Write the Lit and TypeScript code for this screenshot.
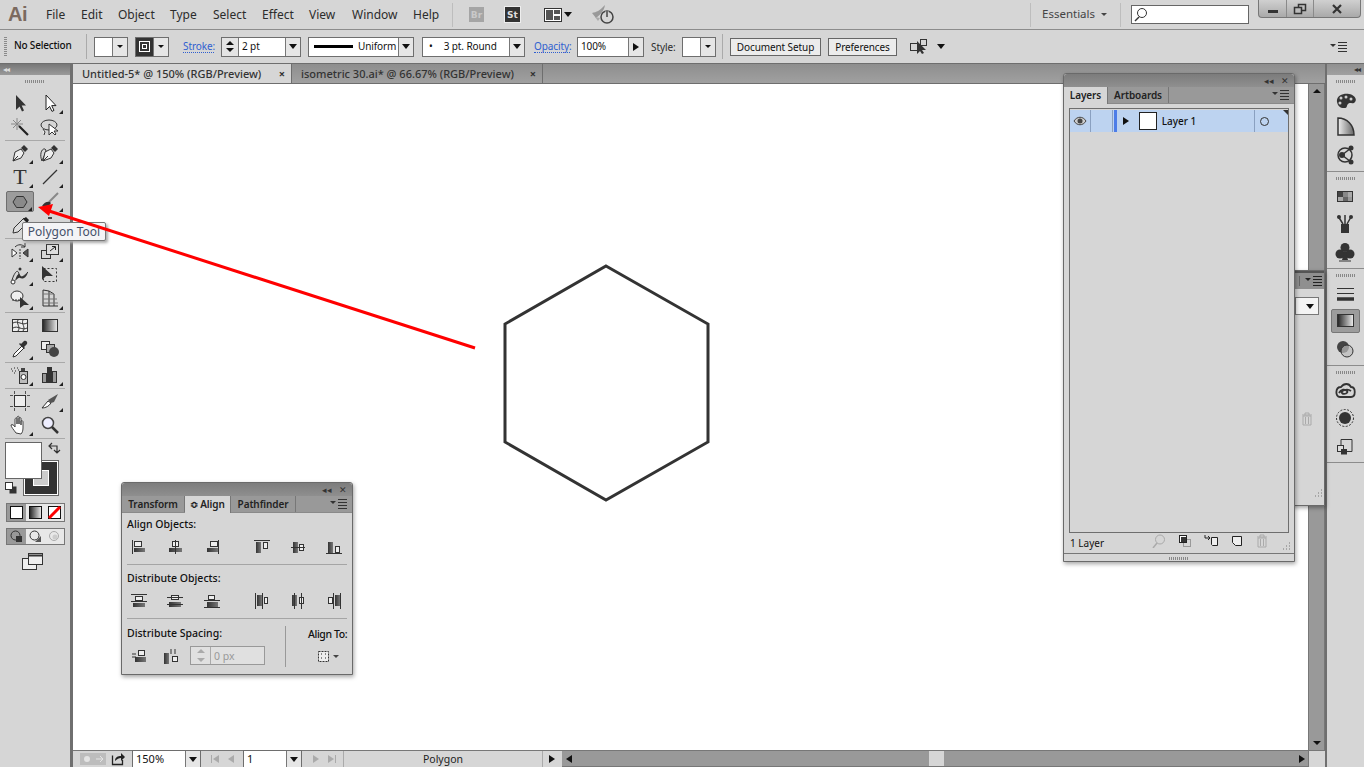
import { LitElement, html, css, svg } from 'lit';
import { customElement } from 'lit/decorators.js';

const ic = (c: unknown, w = 20, h = 20) =>
  html`<svg width="${w}" height="${h}" viewBox="0 0 ${w} ${h}">${c}</svg>`;

const pen = svg`<path d="M3 18l2-9 6-3 3 4-3 5z" fill="#eee" stroke="#333"/><path d="M11 5l3-3 4 4-3 3z" fill="#333"/><path d="M3 18l5-5" stroke="#333"/>`;

const tools: Record<string, unknown> = {
  sel: svg`<path d="M6 2v15l3.6-3.6 2.4 5 2-1-2.3-4.8H16z" fill="#333"/>`,
  dsel: svg`<path d="M6 2v15l3.6-3.6 2.4 5 2-1-2.3-4.8H16z" fill="#fff" stroke="#222"/>`,
  wand: svg`<path d="M7 1v12M1 7h12M3 3l8 8M11 3l-8 8" stroke="#888"/><path d="M9 9l9 9" stroke="#222" stroke-width="2.2"/>`,
  lasso: svg`<ellipse cx="9" cy="8" rx="8" ry="5" fill="none" stroke="#333"/><path d="M3 12l2 3-1 3M9 7v11l3-3 3 3 1-1-2-3h4z" fill="#fff" stroke="#333"/>`,
  pen,
  curv: svg`<path d="M2 18C-1 11 2 5 5 6c3 2-2 8-3 12z" fill="none" stroke="#333"/>${pen}`,
  line: svg`<path d="M3 17L17 3" stroke="#333" stroke-width="1.2"/>`,
  poly: svg`<path d="M6.500 4.500h7l3.500 5.500-3.500 5.500h-7L3 10z" fill="#8a8a8a" stroke="#333"/>`,
  brush: svg`<path d="M18 2L9 11" stroke="#888" stroke-width="2"/><path d="M2 15c2-4 6-5 8-4s0 5-8 4z" fill="#333"/>`,
  pencil: svg`<path d="M3 18l1-5L14 3l4 4L8 17z" fill="#ddd" stroke="#333"/><path d="M13 4l3-2 3 3-2 3z" fill="#222"/>`,
  shaper: svg`<path d="M8 3h4" stroke="#444" stroke-width="2"/>`,
  reflect: svg`<path d="M2 8v8l5-4z" fill="#fff" stroke="#333"/><path d="M18 8v8l-5-4z" fill="#555" stroke="#333"/><path d="M5 6c3-3 7-3 10 0" stroke="#333" fill="none"/><path d="M15 2v4h-4" fill="none" stroke="#333"/><path d="M10 8v10" stroke="#333" stroke-dasharray="2 1"/>`,
  scale: svg`<rect x="1.500" y="9.500" width="9" height="8" fill="none" stroke="#333"/><rect x="6.500" y="3.500" width="12" height="10" fill="#ddd" stroke="#333"/><path d="M10 10l5-4M12 5.500h3.500V9" fill="none" stroke="#222"/>`,
  width: svg`<path d="M2 15C5 6 8 4 9 9s3 4 9-2" fill="none" stroke="#333"/><path d="M5 16c2-7 4-8 5-6s3 3 8-3c-2 7-6 7-8 6s-3 2-5 3z" fill="#333"/><circle cx="3" cy="17" r="2" fill="#fff" stroke="#333"/><circle cx="10" cy="4" r="1.500" fill="#333"/>`,
  free: svg`<rect x="3.500" y="3.500" width="13" height="13" fill="none" stroke="#333" stroke-dasharray="2 2"/><path d="M2 1v14l4-4h7z" fill="#333"/>`,
  builder: svg`<ellipse cx="7" cy="7" rx="6" ry="5" fill="#eee" stroke="#333"/><path d="M2 11h12" stroke="#333" stroke-dasharray="2 1"/><path d="M10 8l9 8h-5l-4 3z" fill="#333"/>`,
  persp: svg`<path d="M3 1v16h15M3 1l6 1v15M9 2l5 3v12" fill="none" stroke="#333"/><path d="M3 5h11M3 10h14M3 14h15" stroke="#777"/>`,
  mesh: svg`<rect x="2.500" y="4.500" width="15" height="12" fill="#eee" stroke="#333"/><path d="M3 8c5-3 9 3 14 0M3 13c5-3 9 3 14 0M8 5c-2 4 3 7 0 11M13 5c-2 4 3 7 0 11" fill="none" stroke="#333"/>`,
  grad: svg`<rect x="2.500" y="4.500" width="15" height="12" fill="url(#g)" stroke="#333"/>`,
  drop: svg`<path d="M3 18l1-3 8-8 2 2-8 8z" fill="#fff" stroke="#333"/><path d="M11 5l3-3c2-1 4 1 3 3l-3 3 1 1-1 1-5-5 1-1z" fill="#333"/>`,
  blend: svg`<rect x="1.500" y="2.500" width="8" height="8" fill="#eee" stroke="#333"/><rect x="6.500" y="5.500" width="8" height="8" fill="#aaa" stroke="#333"/><circle cx="14" cy="13" r="5" fill="#444"/>`,
  spray: svg`<path d="M1 4h1M4 3h1M7 3h1M2 6h1M5 6h1M8 5h1M4 8h1" stroke="#222"/><rect x="9.500" y="6.500" width="8" height="12" fill="#bbb" stroke="#333"/><rect x="11" y="3" width="4" height="3" fill="#444"/><circle cx="13.500" cy="12" r="2.500" fill="#fff" stroke="#333"/>`,
  graph: svg`<rect x="2.500" y="8.500" width="4" height="9" fill="#999" stroke="#333"/><rect x="7" y="2" width="5" height="16" fill="#333"/><rect x="12.500" y="6.500" width="4" height="11" fill="#999" stroke="#333"/>`,
  board: svg`<rect x="4.500" y="4.500" width="11" height="11" fill="#eee" stroke="#333"/><path d="M0 4.500h3M17 4.500h3M0 15.500h3M17 15.500h3M4.500 0v3M15.500 0v3M4.500 17v3M15.500 17v3" stroke="#555"/>`,
  slice: svg`<path d="M2 17l6-7 3 2c-2 3-5 5-9 5z" fill="#fff" stroke="#333"/><path d="M8 9l10-6-4 8-3 1z" fill="#555"/>`,
  hand: svg`<path d="M6 18C4 15 1 12 1 10c1-1 3 0 4 2V4c1-2 2-1 2 0v5-7c1-1 2-1 2 0v7-6c1-1 2 0 2 0v7-4c1-1 2 0 2 1v6c0 3-1 5-2 6z" fill="#fff" stroke="#444"/>`,
  zoom: svg`<circle cx="8" cy="8" r="5.500" fill="#eef" stroke="#444" stroke-width="1.500"/><path d="M12 12l6 6" stroke="#333" stroke-width="2.500"/>`,
};

// name, has flyout corner
const groups: [string, boolean][][] = [
  [['sel', false], ['dsel', true], ['wand', false], ['lasso', false]],
  [['pen', true], ['curv', true], ['T', true], ['line', true], ['poly', true], ['brush', true], ['pencil', true], ['shaper', false]],
  [['reflect', true], ['scale', true], ['width', true], ['free', false], ['builder', true], ['persp', true]],
  [['mesh', false], ['grad', false], ['drop', true], ['blend', false]],
  [['spray', true], ['graph', true]],
  [['board', false], ['slice', true], ['hand', true], ['zoom', false]],
];

const dock: { name: string; on?: boolean; c: unknown }[][] = [
  [
    { name: 'color', c: svg`<path d="M2 12C1 6 8 3 14 4s9 6 5 9c-3 1-4-1-6 1s0 4-4 4-6-2-7-6z" fill="#333"/><circle cx="6" cy="8" r="1.500" fill="#ccc"/><circle cx="11" cy="7" r="1.500" fill="#ccc"/><circle cx="16" cy="9" r="1.500" fill="#ccc"/><circle cx="5" cy="13" r="1.500" fill="#ccc"/>` },
    { name: 'guide', c: svg`<path d="M3 1c9 0 16 7 16 17H3z" fill="url(#g2)" stroke="#333" stroke-width="1.500"/>` },
    { name: 'cc', c: svg`<circle cx="10" cy="10" r="7" fill="none" stroke="#333" stroke-width="1.500"/><circle cx="7" cy="10" r="3" fill="#333"/><path d="M7 10L16 3M7 10l9 7" stroke="#333" stroke-width="1.500"/><circle cx="16" cy="3" r="2.500" fill="#333"/><circle cx="16" cy="17" r="2.500" fill="#333"/>` },
  ],
  [
    { name: 'swatches', c: svg`<rect x="2.500" y="4.500" width="15" height="10" fill="#aaa" stroke="#333"/><path d="M3 5h5v5H3z" fill="#444"/><path d="M8 5h5v5H8z" fill="#888"/><path d="M8 10h5v4H8z" fill="#666"/><path d="M13 10h4v4h-4z" fill="#999"/>` },
    { name: 'brushes', c: svg`<rect x="6" y="10" width="8" height="9" fill="#333"/><path d="M8 10L3 2M10 10V1M12 10l4-7" stroke="#333" stroke-width="1.500"/><circle cx="4" cy="3" r="2" fill="#333"/><circle cx="16" cy="3" r="2" fill="#333"/>` },
    { name: 'symbols', c: svg`<circle cx="10" cy="5.500" r="4.500" fill="#333"/><circle cx="5" cy="12" r="4.500" fill="#333"/><circle cx="15" cy="12" r="4.500" fill="#333"/><path d="M9 10h2l2 8H7z" fill="#333"/><path d="M4 19h12" stroke="#333"/>` },
  ],
  [
    { name: 'stroke', c: svg`<path d="M2 4.500h17M2 9.500h17" stroke="#333"/><path d="M2 15h17" stroke="#333" stroke-width="3.500"/>` },
    { name: 'gradient', on: true, c: svg`<rect x="2.500" y="3.500" width="16" height="12" fill="url(#g)" stroke="#333"/>` },
    { name: 'transp', c: svg`<circle cx="8" cy="8" r="6" fill="#444"/><circle cx="12" cy="12" r="6" fill="#bbb" fill-opacity=".7" stroke="#333"/>` },
  ],
  [
    { name: 'cloud', c: svg`<path d="M5 16C0 16 0 6 6 6c3-4 8-4 10 0 5 0 5 10 0 10H5z" fill="none" stroke="#333" stroke-width="1.800"/><path d="M4 12c2-4 6-4 8-2s-3 4-5 2 5-5 9-2" fill="none" stroke="#333" stroke-width="1.800"/>` },
    { name: 'appearance', c: svg`<circle cx="10" cy="10" r="8.500" fill="none" stroke="#333" stroke-dasharray="2 1.500"/><circle cx="10" cy="10" r="6" fill="#333"/>` },
    { name: 'styles', c: svg`<path d="M6 9V3.500h11v12h-6" fill="none" stroke="#333"/><rect x="2.500" y="9.500" width="6" height="6" fill="#ddd" stroke="#333"/><rect x="6" y="13" width="6" height="5.500" fill="#333"/>` },
  ],
];

type Box = [number, number, number, number];
const al = (lines: string, dark: Box, light: Box) => ic(svg`
  <rect x="${dark[0]}" y="${dark[1]}" width="${dark[2]}" height="${dark[3]}" fill="url(#bar)"/>
  <rect x="${light[0] + 0.5}" y="${light[1] + 0.5}" width="${light[2] - 1}" height="${light[3] - 1}" fill="#eee" stroke="#333"/>
  <path d="${lines}" stroke="#333"/>`, 16, 16);

const alignRow = [
  al('M1.500 1v14', [3, 9, 11, 4], [3, 2, 8, 6]),
  al('M8.500 1v14', [2, 9, 13, 4], [5, 2, 7, 6]),
  al('M14.500 1v14', [3, 9, 11, 4], [6, 2, 8, 6]),
  al('M0 1.500h16', [2, 3, 5, 11], [9, 3, 5, 7]),
  al('M1 8.500h14', [3, 3, 5, 11], [9, 5, 5, 7]),
  al('M0 14.500h16', [2, 3, 5, 11], [9, 7, 5, 7]),
];
const distRow = [
  al('M0 1.500h16M0 8.500h16', [2, 10, 12, 4], [4, 3, 8, 5]),
  al('M0 4.500h16M0 11.500h16', [2, 9, 12, 5], [4, 2, 8, 5]),
  al('M0 7.500h16M0 14.500h16', [3, 9, 11, 5], [4, 2, 7, 5]),
  al('M1.500 0v16M8.500 0v16', [3, 2, 5, 11], [10, 4, 4, 7]),
  al('M4.500 0v16M11.500 0v16', [2, 2, 5, 11], [9, 4, 5, 7]),
  al('M7.500 0v16M14.500 0v16', [9, 2, 5, 11], [2, 4, 5, 7]),
];
const spaceIcons = [
  al('M1 6h4M1 9h4', [4, 9, 11, 5], [7, 2, 7, 6]),
  al('M8 1v5M12 1v5', [1, 5, 5, 11], [9, 8, 6, 6]),
];

@customElement('app-root')
export class AppRoot extends LitElement {
  static styles = css`
    :host {
      display: block; position: relative; width: 1364px; height: 767px; overflow: hidden;
      background: #d6d6d6; color: #2c2c2c;
      font: 11px "Noto Sans", "Open Sans", sans-serif;
    }
    svg { display: block; flex: none; }
    .defs { position: absolute; }
    .tri { width: 0; height: 0; flex: none; border-left: 4.5px solid transparent; border-right: 4.5px solid transparent; border-top: 5px solid #111; }
    .tri.sm { border-left-width: 3px; border-right-width: 3px; border-top-width: 3px; border-top-color: #444; }
    .tri.blk { border-top-color: #111; }
    .tr { width: 0; height: 0; flex: none; border-top: 4.5px solid transparent; border-bottom: 4.5px solid transparent; border-left: 6px solid #111; }
    .tl { width: 0; height: 0; flex: none; border-top: 4.5px solid transparent; border-bottom: 4.5px solid transparent; border-right: 6px solid #111; }

    /* menu bar */
    .menubar { height: 29px; display: flex; align-items: center; border-bottom: 1px solid #8c8c8c; box-sizing: content-box; }
    .logo { width: 46px; padding-left: 8px; box-sizing: border-box; font: bold 20px "Liberation Sans", sans-serif; color: #7b6a5f; letter-spacing: -0.5px; }
    .menus { display: grid; grid-template-columns: 35px 37px 52px 43px 49px 47px 43px 61px 39px; font-size: 12px; padding-bottom: 1px; }
    .vsep { width: 1px; height: 24px; background: #bdbdbd; flex: none; }
    .vsep.r { margin-left: 13px; }
    .app { width: 15px; height: 15px; display: flex; align-items: center; justify-content: center; font: bold 9px "DejaVu Sans", sans-serif; flex: none; }
    .app.br { margin-left: 16px; background: #a5a5a5; color: #c9c9c9; }
    .app.st { margin-left: 21px; background: #333; color: #ddd; outline: 1px solid #eee; }
    .layout { margin-left: 24px; }
    .mini { margin-left: 2px; }
    .rocket { margin-left: 20px; }
    .fill { flex: 1; }
    .essentials { width: 59px; padding-left: 11px; font-size: 11.5px; color: #444; padding-bottom: 3px; white-space: nowrap; }
    .search { margin-left: 10px; width: 115px; height: 17px; background: #fff; border: 1px solid #666; box-sizing: content-box; display: flex; align-items: center; padding-left: 1px; }
    .winbtns { margin-left: 9px; margin-right: 3px; align-self: flex-start; height: 17px; display: flex; border: 1px solid #777; border-top: 0; border-radius: 0 0 4px 4px; background: linear-gradient(#d0d0d0, #a9a9a9); }
    .winbtns div { display: flex; align-items: center; justify-content: center; border-left: 1px solid #8a8a8a; }
    .winbtns div:first-child { width: 27px; border-left: 0; }
    .winbtns div:nth-child(2) { width: 26px; }
    .winbtns div:nth-child(3) { width: 46px; }

    /* control bar */
    .control { height: 33px; display: flex; align-items: center; border-bottom: 1px solid #6e6e6e; font-size: 10px; letter-spacing: -0.1px; }
    .grip-v { margin-left: 4px; width: 3px; height: 19px; background: repeating-linear-gradient(#8a8a8a 0 1px, transparent 1px 2px); }
    .nosel { margin-left: 7px; width: 72px; font-weight: 500; color: #111; white-space: nowrap; padding-bottom: 3px; letter-spacing: -0.2px; }
    .div2 { width: 1px; height: 25px; background: #aaa; flex: none; }
    .box { height: 18px; display: flex; align-items: stretch; background: #fff; border: 1px solid #6e6e6e; flex: none; }
    .dd { width: 14px; background: #e6e6e6; border-left: 1px solid #777; display: flex; align-items: center; justify-content: center; flex: none; }
    .swatch { width: 32px; justify-content: flex-end; }
    .ml-fill { margin-left: 7px; }
    .stroke-swatch { margin-left: 7px; background: #333; }
    .stroke-swatch .well { width: 17px; display: flex; align-items: center; justify-content: center; }
    .link { color: #2f5fd0; border-bottom: 1px dotted #2f5fd0; line-height: 11px; flex: none; }
    .stroke-lbl { margin-left: 14px; width: 31px; }
    .spin { margin-left: 7px; width: 78px; }
    .spin .arrows { width: 17px; background: #e4e4e4; border-right: 1px solid #777; display: flex; flex-direction: column; align-items: center; justify-content: space-around; padding: 2px 0; box-sizing: border-box; }
    .up { width: 0; height: 0; border-left: 4px solid transparent; border-right: 4px solid transparent; border-bottom: 4px solid #111; }
    .down { width: 0; height: 0; border-left: 4px solid transparent; border-right: 4px solid transparent; border-top: 4px solid #111; }
    .val { flex: 1; padding-left: 3px; line-height: 17px; color: #111; white-space: nowrap; overflow: hidden; }
    .uniform { margin-left: 7px; width: 104px; }
    .uniform .val { display: flex; align-items: center; padding-left: 5px; gap: 5px; }
    .uniform i { width: 39px; height: 3px; background: #000; flex: none; }
    .round { margin-left: 8px; width: 101px; }
    .round .val { padding-left: 6px; display: flex; gap: 11px; }
    .op-lbl { margin-left: 9px; width: 36px; }
    .opacity { margin-left: 7px; width: 65px; }
    .plain { flex: none; }
    .style-lbl { margin-left: 7px; width: 31px; }
    .style-box { width: 32px; }
    .div3 { margin-left: 6px; }
    .btn { height: 16px; border: 1px solid #666; background: #ececec; display: flex; align-items: center; justify-content: center; color: #111; flex: none; white-space: nowrap; }
    .doc-setup { margin-left: 7px; width: 89px; }
    .prefs { margin-left: 7px; width: 67px; }
    .isolate { margin-left: 12px; }
    .iso-arrow { margin-left: 8px; }
    .menu-ic { margin-right: 16px; }

    /* workspace */
    .workspace { display: flex; height: 703px; }
    .tools { width: 70px; flex: none; border-right: 3px solid #6f6f6f; display: flex; flex-direction: column; }
    .head { height: 11px; background: linear-gradient(#777, #9a9a9a); color: #ddd; font-size: 8px; line-height: 10px; padding-left: 3px; flex: none; letter-spacing: -1px; }
    .grip-h { height: 3px; width: 20px; margin: 5px auto 0; background: repeating-linear-gradient(90deg, #888 0 1px, transparent 1px 2px); flex: none; }
    .toolgrid { display: grid; grid-template-columns: 30px 30px; grid-auto-rows: 24px; padding-left: 5px; }
    .toolgrid.first { margin-top: 8px; }
    .tool { position: relative; display: flex; align-items: center; justify-content: center; font: 22px "Liberation Serif", serif; color: #333; }
    .tool.corner::after { content: ""; position: absolute; right: 2px; bottom: 1px; border-bottom: 4px solid #222; border-left: 4px solid transparent; }
    .tool.active { margin: 2px 1px 1px; background: #9c9c9c; border: 1px solid #6f6f6f; border-radius: 2px; box-sizing: border-box; }
    .tool.active::after { right: 1px; bottom: 0; }
    .tsep { height: 1px; margin: 1px 5px 0; background: #a9a9a9; flex: none; }
    .colors { position: relative; height: 58px; margin-top: 3px; flex: none; }
    .colors .fillbox { position: absolute; left: 5px; top: 0; width: 35px; height: 35px; background: #fff; border: 1px solid #666; z-index: 1; }
    .colors .strokebox { position: absolute; left: 23px; top: 18px; width: 36px; height: 36px; box-sizing: border-box; background: #333; border: 1px solid #666; box-shadow: inset 0 0 0 1px #fff; display: flex; align-items: center; justify-content: center; }
    .colors .inner { width: 16px; height: 16px; background: #ccc; border: 1px solid #fff; box-sizing: border-box; }
    .colors .swap { position: absolute; left: 47px; top: 0; }
    .colors .def { position: absolute; left: 5px; top: 40px; }
    .modes { margin: 3px 0 0 6px; width: 59px; height: 19px; display: flex; border: 1px solid #777; box-sizing: border-box; background: #e8e8e8; flex: none; }
    .modes div { flex: 1; display: flex; align-items: center; justify-content: center; }
    .modes div:first-child { background: #999; }
    .modes.draw { margin-top: 6px; height: 17px; }
    .screen { margin: 8px 0 0 22px; }

    .center { flex: 1; min-width: 0; display: flex; flex-direction: column; }
    .tabs { height: 19px; display: flex; background: linear-gradient(#8e8e8e, #a0a0a0); border-bottom: 1px solid #6e6e6e; flex: none; }
    .tab { display: flex; align-items: center; justify-content: space-between; padding: 0 6px 0 9px; box-sizing: border-box; font-size: 11px; font-weight: 500; color: #333; white-space: nowrap; border-right: 1px solid #6e6e6e; }
    .tab.on { width: 219px; background: #d6d6d6; }
    .tab.off { width: 251px; }
    .x { font-size: 11px; line-height: 10px; color: #333; font-weight: 700; }
    .doc { flex: 1; display: flex; min-height: 0; }
    .canvas { flex: 1; background: #fff; }
    .vscroll { width: 15px; background: #999; border-left: 1px solid #777; border-right: 1px solid #777; display: flex; flex-direction: column; align-items: center; justify-content: space-between; padding: 5px 0; box-sizing: content-box; }
    .statusbar { height: 17px; display: flex; align-items: center; border-top: 1px solid #777; flex: none; box-sizing: border-box; }
    .share { margin-left: 5px; }
    .gear { margin-left: 7px; }
    .zoomf { margin-left: 6px; width: 67px; height: 16px; }
    .zoomf .val, .pagef .val { line-height: 15px; }
    .nav { flex: none; }
    .nav.a { margin-left: 9px; width: 33px; }
    .pagef { width: 57px; height: 16px; }
    .nav.b { margin-left: 9px; width: 32px; }
    .polygon { width: 200px; height: 100%; border-left: 1px solid #aaa; border-right: 1px solid #aaa; display: flex; align-items: center; justify-content: center; color: #222; box-sizing: border-box; font-size: 10.5px; }
    .hscroll-r { margin-left: 6px; }
    .hscroll { margin-left: 7px; flex: 1; height: 100%; background: #999; display: flex; align-items: center; justify-content: space-between; padding: 0 3px 0 4px; position: relative; border-bottom: 1px solid #777; box-sizing: border-box; }
    .thumb { position: absolute; left: 367px; top: 0; width: 15px; height: 100%; background: #d6d6d6; }
    .corner-sq { width: 17px; height: 100%; flex: none; background: #d6d6d6; border-left: 1px solid #777; box-sizing: border-box; }

    .dock { width: 39px; flex: none; border-left: 2px solid #6f6f6f; box-sizing: border-box; display: flex; flex-direction: column; }
    .dock .head { text-align: right; padding: 0 4px 0 0; background: linear-gradient(#909090, #a0a0a0); color: #333; }
    .dgroup { border-bottom: 1px solid #8c8c8c; padding: 5px 0 2.500px; display: flex; flex-direction: column; align-items: center; flex: none; }
    .dgroup .grip-h { margin: 0 auto 3px; }
    .dicon { height: 27.500px; width: 29px; display: flex; align-items: center; justify-content: center; }
    .dicon.on { height: 24px; margin: 1.750px 0; background: #9c9c9c; border: 1px solid #777; border-radius: 2px; box-sizing: border-box; }

    /* free floating things */
    .over { position: absolute; left: 0; top: 0; pointer-events: none; }
    .tip { position: absolute; left: 22px; top: 222px; height: 19px; width: 84px; box-sizing: border-box; background: #f4f4f6; border: 1px solid #777; border-radius: 2px; box-shadow: 2px 2px 3px #aaa; display: flex; align-items: center; justify-content: center; color: #44506a; font-size: 12px; white-space: nowrap; }
    .panel { position: absolute; background: #d6d6d6; border: 1px solid #6a6a6a; box-shadow: 1px 2px 4px rgba(0,0,0,.35); box-sizing: border-box; display: flex; flex-direction: column; border-radius: 3px 3px 0 0; }
    .phead { height: 13px; background: linear-gradient(#7c7c7c, #8f8f8f); display: flex; align-items: center; justify-content: flex-end; gap: 7px; padding: 0 5px 1px 0; box-sizing: border-box; color: #333; font-size: 9px; line-height: 9px; flex: none; border-radius: 3px 3px 0 0; }
    .ptabs { height: 17px; display: flex; background: #999; border-bottom: 1px solid #8a8a8a; flex: none; align-items: stretch; box-sizing: border-box; }
    .ptab { display: flex; align-items: center; justify-content: center; font-weight: 600; font-size: 10px; color: #222; border-right: 1px solid #777; box-sizing: border-box; white-space: nowrap; padding-bottom: 1px; letter-spacing: -0.1px; }
    .ptab.on { background: #d6d6d6; margin-bottom: -1px; }
    .pmenu { margin-left: auto; align-self: center; margin-right: 4px; }
    .layers { left: 1063px; top: 73px; width: 232px; height: 489px; }
    .layers .ptab:nth-child(1) { width: 44px; }
    .layers .ptab:nth-child(2) { width: 61px; }
    .list { margin: 4px 5px 0; height: 425px; border: 1px solid #6e6e6e; box-sizing: border-box; flex: none; }
    .row { height: 22px; margin-top: 1px; background: #bdd3f0; display: flex; align-items: center; position: relative; }
    .row .eye { width: 20px; height: 100%; border-right: 1px solid #8aa0c0; display: flex; align-items: center; justify-content: center; }
    .row .lock { width: 21px; height: 100%; border-right: 1px solid #8aa0c0; flex: none; }
    .row .bluebar { width: 3px; height: 100%; margin-left: 1px; background: #4d7de8; flex: none; }
    .row .tr { margin-left: 6px; }
    .row .thumbn { width: 18px; height: 18px; margin-left: 10px; background: #fff; border: 1px solid #222; box-sizing: border-box; flex: none; }
    .row .name { margin-left: 5px; width: 94px; color: #111; font-size: 10px; font-weight: 500; padding-bottom: 1px; }
    .row .target { width: 34px; height: 100%; border-left: 1px solid #8aa0c0; display: flex; align-items: center; justify-content: center; padding-right: 14px; box-sizing: border-box; }
    .row .target i { width: 7px; height: 7px; border: 1px solid #333; border-radius: 50%; }
    .row::after { content: ""; position: absolute; right: 0; top: 0; border-top: 5px solid #333; border-left: 5px solid transparent; }
    .pfoot { height: 20px; display: flex; align-items: center; padding-left: 6px; font-size: 10px; color: #111; flex: none; }
    .pfoot .ficons { margin-left: auto; margin-right: 13px; display: flex; gap: 12px; padding-bottom: 4px; }
    .pfoot .rsz { margin: 7px 3px 0 0; }
    .pstrip { height: 8px; border-top: 1px solid #777; display: flex; align-items: center; justify-content: center; flex: none; }
    .pstrip .grip-h { margin: 0; }
    .behind { left: 1280px; top: 270px; width: 45px; height: 236px; border-radius: 0; }
    .bh { height: 18px; background: #8f8f8f; display: flex; align-items: center; justify-content: flex-end; gap: 5px; padding-right: 1px; flex: none; border-top: 2px solid #555; box-sizing: border-box; }
    .bh i { width: 1px; height: 10px; background: #666; }
    .behind .bd { margin: 8px 0 0 14px; width: 24px; height: 18px; display: flex; }
    .dd2 { flex: 1; background: #f4f4f4; border: 1px solid #777; display: flex; align-items: center; justify-content: center; padding-left: 6px; }
    .behind .trash { margin: 97px 0 0 20px; }
    .behind .rz { margin: 63px 0 0 32px; }
    .align { left: 121px; top: 482px; width: 232px; height: 193px; }
    .align .ptab:nth-child(1) { width: 63px; }
    .align .ptab:nth-child(2) { width: 46px; gap: 2px; }
    .align .ptab:nth-child(3) { width: 65px; }
    .abody { padding: 4px 5px 0; flex: 1; display: flex; flex-direction: column; }
    .abody label { font-size: 10.5px; font-weight: 500; color: #111; line-height: 14px; height: 14px; white-space: nowrap; }
    .irow { display: grid; grid-template-columns: 36px 37px 50px 36px 36px 20px; padding-left: 4px; margin-top: 8px; height: 16px; }
    .asep { height: 1px; background: #a5a5a5; margin: 9px 0 6px; flex: none; }
    .bottom { display: flex; }
    .spacing { width: 158px; }
    .sprow { display: flex; align-items: center; margin-top: 6px; padding-left: 4px; }
    .sprow svg + svg { margin-left: 16px; }
    .spin2 { margin-left: 11px; width: 75px; height: 19px; border: 1px solid #999; box-sizing: border-box; display: flex; background: #e0e0e0; color: #999; align-items: center; font-size: 10.5px; }
    .spin2 .a { width: 19px; height: 100%; border-right: 1px solid #aaa; display: flex; flex-direction: column; justify-content: space-around; align-items: center; margin-right: 3px; }
    .spin2 .up { border-bottom-color: #aaa; }
    .spin2 .down { border-top-color: #aaa; }
    .alignto { border-left: 1px solid #999; height: 41px; margin-top: 1px; padding-left: 22px; width: 60px; box-sizing: border-box; flex: none; white-space: nowrap; }
    .alignto label { letter-spacing: -0.4px; }
    .ato { margin: 7px 0 0 7px; display: flex; align-items: center; gap: 2px; }
  `;

  private menuIcon(c = '#333') {
    return ic(svg`<path d="M0 3h6L3 6z" fill="${c}"/><path d="M8 1.500h9M8 4.500h9M8 7.500h9M8 10.500h9" stroke="${c}"/>`, 18, 12);
  }

  private grip() { return html`<div class="grip-h"></div>`; }

  render() {
    const menus = ['File', 'Edit', 'Object', 'Type', 'Select', 'Effect', 'View', 'Window', 'Help'];
    return html`
      <svg class="defs" width="0" height="0"><defs>
        <linearGradient id="g"><stop offset="0" stop-color="#222"/><stop offset="1" stop-color="#eee"/></linearGradient>
        <linearGradient id="g2" x1="0" y1="0" x2="1" y2="0"><stop offset="0" stop-color="#eee"/><stop offset="1" stop-color="#666"/></linearGradient>
        <linearGradient id="bar"><stop offset="0" stop-color="#333"/><stop offset="1" stop-color="#777"/></linearGradient>
      </defs></svg>

      <div class="menubar">
        <div class="logo">Ai</div>
        <div class="menus">${menus.map((m) => html`<span>${m}</span>`)}</div>
        <div class="vsep"></div>
        <div class="app br">Br</div>
        <div class="app st">St</div>
        <div class="layout">${ic(svg`<rect x=".5" y="1.500" width="17" height="13" fill="#fff" stroke="#333"/><rect x="2" y="3" width="7" height="10" fill="#555"/><rect x="10" y="3" width="6" height="4" fill="#555"/><rect x="10" y="9" width="6" height="4" fill="#555"/>`, 18, 16)}</div>
        <div class="tri mini"></div>
        <div class="rocket">${ic(svg`<path d="M0 8c5-1 7-2 13-8-1 6-5 10-9 13z" fill="#999"/><path d="M3 12l3 4 2-3z" fill="#aaa"/><circle cx="15" cy="12" r="6" fill="none" stroke="#444" stroke-width="1.500"/><path d="M15 6v6" stroke="#d6d6d6" stroke-width="3"/><path d="M15 6v6" stroke="#444" stroke-width="1.500"/>`, 22, 20)}</div>
        <div class="fill"></div>
        <div class="vsep"></div>
        <div class="essentials">Essentials</div>
        <div class="tri sm"></div>
        <div class="vsep r"></div>
        <div class="search">${ic(svg`<circle cx="9" cy="6" r="4.500" fill="none" stroke="#333"/><path d="M6 10l-4 4" stroke="#333" stroke-width="1.500"/>`, 15, 15)}</div>
        <div class="winbtns">
          <div>${ic(svg`<rect x="2" y="7" width="10" height="3" fill="#333"/>`, 14, 12)}</div>
          <div>${ic(svg`<rect x="5.500" y="1.500" width="7" height="6" fill="none" stroke="#333" stroke-width="1.500"/><rect x="1.500" y="4.500" width="7" height="6" fill="#bbb" stroke="#333" stroke-width="1.500"/>`, 14, 12)}</div>
          <div>${ic(svg`<path d="M2 1l8 8M10 1L2 9" stroke="#333" stroke-width="2.200"/>`, 12, 10)}</div>
        </div>
      </div>

      <div class="control">
        <div class="grip-v"></div>
        <div class="nosel">No Selection</div>
        <div class="div2"></div>
        <div class="box swatch ml-fill"><div class="dd"><div class="tri sm blk"></div></div></div>
        <div class="box swatch stroke-swatch">
          <div class="well">${ic(svg`<rect x=".5" y=".5" width="10" height="10" fill="none" stroke="#fff"/><rect x="3.500" y="3.500" width="4" height="4" fill="none" stroke="#fff"/>`, 11, 11)}</div>
          <div class="dd"><div class="tri sm blk"></div></div>
        </div>
        <div class="link stroke-lbl">Stroke:</div>
        <div class="box spin">
          <div class="arrows"><div class="up"></div><div class="down"></div></div>
          <div class="val">2 pt</div>
          <div class="dd"><div class="tri"></div></div>
        </div>
        <div class="box uniform"><div class="val"><i></i><span>Uniform</span></div><div class="dd"><div class="tri"></div></div></div>
        <div class="box round"><div class="val"><span>•</span><span>3 pt. Round</span></div><div class="dd"><div class="tri"></div></div></div>
        <div class="link op-lbl">Opacity:</div>
        <div class="box opacity"><div class="val">100%</div><div class="dd"><div class="tr"></div></div></div>
        <div class="plain style-lbl">Style:</div>
        <div class="box swatch style-box"><div class="dd"><div class="tri sm blk"></div></div></div>
        <div class="div2 div3"></div>
        <div class="btn doc-setup">Document Setup</div>
        <div class="btn prefs">Preferences</div>
        <div class="isolate">${ic(svg`<rect x="1.500" y="5.500" width="7" height="7" fill="none" stroke="#333"/><rect x="11.500" y="1.500" width="6" height="6" fill="none" stroke="#333"/><path d="M8 3v13l3-3 2 3 2-1-2-3h4z" fill="#333"/>`, 20, 18)}</div>
        <div class="tri iso-arrow"></div>
        <div class="fill"></div>
        <div class="menu-ic">${this.menuIcon()}</div>
      </div>

      <div class="workspace">
        <div class="tools">
          <div class="head">◂◂</div>
          ${this.grip()}
          ${groups.map((g, i) => html`
            <div class="toolgrid ${i === 0 ? 'first' : ''}">
              ${g.map(([name, corner]) => html`
                <div class="tool ${corner ? 'corner' : ''} ${name === 'poly' ? 'active' : ''}">${name === 'T' ? 'T' : ic(tools[name])}</div>`)}
            </div>
            <div class="tsep"></div>`)}
          <div class="colors">
            <div class="fillbox"></div>
            <div class="strokebox"><div class="inner"></div></div>
            <div class="swap">${ic(svg`<path d="M2 4h8v6M5 1L2 4l3 3M7 8l3 3 3-3" fill="none" stroke="#333" stroke-width="1.200"/>`, 14, 14)}</div>
            <div class="def">${ic(svg`<rect x="4.500" y="4.500" width="7" height="7" fill="#333"/><rect x=".5" y=".5" width="7" height="7" fill="#fff" stroke="#333"/>`, 12, 12)}</div>
          </div>
          <div class="modes">
            <div>${ic(svg`<rect x=".5" y=".5" width="12" height="12" fill="#fff" stroke="#111"/>`, 13, 13)}</div>
            <div>${ic(svg`<rect x=".5" y=".5" width="12" height="12" fill="url(#g)" stroke="#111"/>`, 13, 13)}</div>
            <div>${ic(svg`<rect x=".5" y=".5" width="12" height="12" fill="#fff" stroke="#111"/><path d="M1 12L12 1" stroke="#f00" stroke-width="3"/>`, 13, 13)}</div>
          </div>
          <div class="modes draw">
            <div>${ic(svg`<circle cx="5.500" cy="5.500" r="4.500" fill="none" stroke="#333"/><rect x="6" y="6" width="6" height="6" fill="#333"/>`, 13, 13)}</div>
            <div>${ic(svg`<circle cx="5.500" cy="5.500" r="4.500" fill="none" stroke="#333"/><path d="M6 12h6V6z" fill="#555"/>`, 13, 13)}</div>
            <div>${ic(svg`<circle cx="6" cy="6" r="4.500" fill="none" stroke="#aaa"/><circle cx="7" cy="7" r="2.500" fill="#ccc"/>`, 13, 13)}</div>
          </div>
          <div class="screen">${ic(svg`<rect x=".5" y="5.500" width="14" height="11" fill="#eee" stroke="#333"/><rect x="6.500" y=".5" width="14" height="11" fill="#eee" stroke="#333"/><path d="M6 2.500h15" stroke="#333" stroke-width="2"/>`, 22, 18)}</div>
        </div>

        <div class="center">
          <div class="tabs">
            <div class="tab on"><span>Untitled-5* @ 150% (RGB/Preview)</span><span class="x">×</span></div>
            <div class="tab off"><span>isometric 30.ai* @ 66.67% (RGB/Preview)</span><span class="x">×</span></div>
          </div>
          <div class="doc">
            <div class="canvas"></div>
            <div class="vscroll"><div class="up"></div><div class="down"></div></div>
          </div>
          <div class="statusbar">
            <div class="gear">${ic(svg`<rect width="26" height="12" y="1" fill="#bdbdbd"/><circle cx="7" cy="7" r="3" fill="#e4e4e4"/><path d="M16 7h6m-2-3l3 3-3 3" stroke="#e4e4e4" fill="none"/>`, 26, 14)}</div>
            <div class="share">${ic(svg`<path d="M1.500 3.500v9h10V8" fill="none" stroke="#222" stroke-width="1.300"/><path d="M4 9c0-4 3-5 6-5V1l4 4-4 4V6C8 6 6 7 4 9z" fill="#222"/>`, 15, 14)}</div>
            <div class="box zoomf"><div class="val">150%</div><div class="dd"><div class="tri"></div></div></div>
            <div class="nav a">${ic(svg`<path d="M1.500 2v8" stroke="#aaa"/><path d="M9 2v8L3 6zM24 2v8l-6-4z" fill="#aaa"/>`, 26, 12)}</div>
            <div class="box pagef"><div class="val">1</div><div class="dd"><div class="tri"></div></div></div>
            <div class="nav b">${ic(svg`<path d="M2 2v8l6-4zM17 2v8l6-4z" fill="#aaa"/><path d="M24.500 2v8" stroke="#aaa"/>`, 26, 12)}</div>
            <div class="polygon">Polygon</div>
            <div class="tr hscroll-r"></div>
            <div class="hscroll"><div class="tl"></div><div class="thumb"></div><div class="tr"></div></div>
            <div class="corner-sq"></div>
          </div>
        </div>

        <div class="dock">
          <div class="head">◂◂</div>
          ${dock.map((d) => html`
            <div class="dgroup">
              ${this.grip()}
              ${d.map((it) => html`<div class="dicon ${it.on ? 'on' : ''}">${ic(it.c, 21, 20)}</div>`)}
            </div>`)}
        </div>
      </div>

      <svg class="over" width="1364" height="767">
        <path d="M606 266l102 58v118l-102 58-101-58V324z" fill="none" stroke="#333" stroke-width="3"/>
      </svg>

      <div class="panel behind">
        <div class="bh"><i></i>${this.menuIcon('#222')}</div>
        <div class="bd"><div class="dd2"><div class="tri"></div></div></div>
        <div class="trash">${ic(svg`<path d="M1 3h10M4 3V1h4v2M2 4h8v9H2zM4.500 5v7M7.500 5v7" fill="none" stroke="#aaa"/>`, 12, 14)}</div>
        <div class="rz">${ic(svg`<path d="M8 1h1M8 4h1M5 4h1M8 7h1M5 7h1M2 7h1" stroke="#777"/>`, 10, 9)}</div>
      </div>

      <div class="panel layers">
        <div class="phead"><span>◂◂</span><span>✕</span></div>
        <div class="ptabs">
          <div class="ptab on">Layers</div>
          <div class="ptab">Artboards</div>
          <div class="pmenu">${this.menuIcon()}</div>
        </div>
        <div class="list">
          <div class="row">
            <div class="eye">${ic(svg`<path d="M1 5c3-5 9-5 12 0-3 5-9 5-12 0z" fill="#ccc" stroke="#444"/><circle cx="7" cy="5" r="2.500" fill="#444"/>`, 14, 10)}</div>
            <div class="lock"></div>
            <div class="bluebar"></div>
            <div class="tr"></div>
            <div class="thumbn"></div>
            <div class="name">Layer 1</div>
            <div class="target"><i></i></div>
          </div>
        </div>
        <div class="pfoot">
          <span>1 Layer</span>
          <div class="ficons">
            ${ic(svg`<circle cx="8" cy="5.500" r="4.500" fill="none" stroke="#aaa"/><path d="M5 9l-4 5" stroke="#aaa" stroke-width="1.500"/>`, 14, 14)}
            ${ic(svg`<rect x="5.500" y="5.500" width="7" height="7" fill="none" stroke="#999"/><rect x="1.500" y="1.500" width="7" height="7" fill="#fff" stroke="#222"/><rect x="3" y="3" width="5" height="5" fill="#333"/>`, 14, 14)}
            ${ic(svg`<path d="M1 1v3h5M4 2l2 2-2 2" fill="none" stroke="#222"/><path d="M7.500 3.500h6v8h-5l-1-1z" fill="#eee" stroke="#222"/>`, 14, 14)}
            ${ic(svg`<path d="M2.500 2.500h9v9h-6l-3-3z" fill="#eee" stroke="#222"/>`, 14, 14)}
            ${ic(svg`<path d="M1 3h10M4 3V1h4v2M2 4h8v9H2zM4.500 5v7M7.500 5v7" fill="none" stroke="#aaa"/>`, 12, 14)}
          </div>
          <div class="rsz">${ic(svg`<path d="M8 1h1M8 4h1M5 4h1M8 7h1M5 7h1M2 7h1" stroke="#777"/>`, 10, 9)}</div>
        </div>
        <div class="pstrip">${this.grip()}</div>
      </div>

      <div class="panel align">
        <div class="phead"><span>◂◂</span><span>✕</span></div>
        <div class="ptabs">
          <div class="ptab">Transform</div>
          <div class="ptab on"><span>≎</span>Align</div>
          <div class="ptab">Pathfinder</div>
          <div class="pmenu">${this.menuIcon()}</div>
        </div>
        <div class="abody">
          <label>Align Objects:</label>
          <div class="irow">${alignRow}</div>
          <div class="asep"></div>
          <label>Distribute Objects:</label>
          <div class="irow">${distRow}</div>
          <div class="asep"></div>
          <div class="bottom">
            <div class="spacing">
              <label>Distribute Spacing:</label>
              <div class="sprow">
                ${spaceIcons}
                <div class="spin2"><div class="a"><div class="up"></div><div class="down"></div></div>0 px</div>
              </div>
            </div>
            <div class="alignto">
              <label>Align To:</label>
              <div class="ato">
                ${ic(svg`<rect x="3.500" y="3.500" width="10" height="10" fill="#eee" stroke="#333" stroke-dasharray="2 1"/><path d="M6 6h1M10 6h1M6 10h1M10 10h1" stroke="#222"/>`, 16, 16)}
                <div class="tri sm"></div>
              </div>
            </div>
          </div>
        </div>
      </div>

      <div class="tip">Polygon Tool</div>

      <svg class="over" width="1364" height="767">
        <path d="M475 348L46 210" stroke="#f00" stroke-width="3" fill="none"/>
        <path d="M38 207l15-3-4 12z" fill="#f00"/>
      </svg>
    `;
  }
}
